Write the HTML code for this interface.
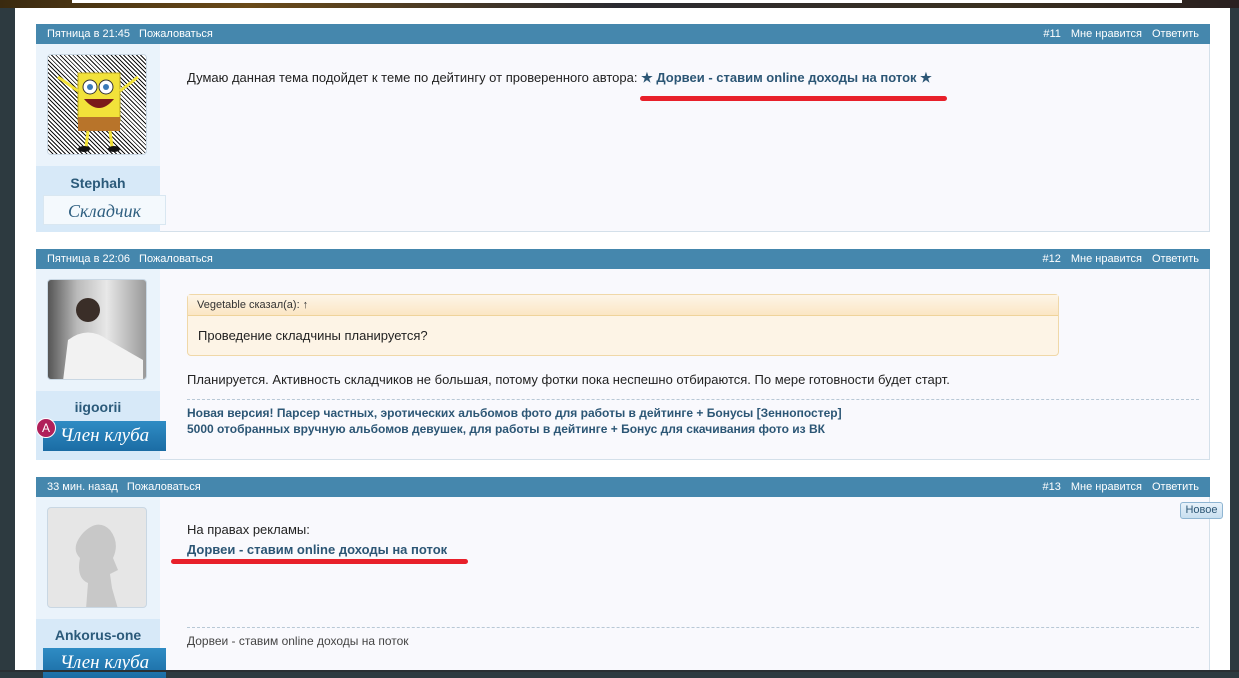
<!DOCTYPE html>
<html><head><meta charset="utf-8"><style>
*{margin:0;padding:0;box-sizing:border-box}
body{width:1239px;height:672px;overflow:hidden;background:#2d3a40;font-family:"Liberation Sans",Arial,sans-serif;position:relative}
.a{position:absolute}
.page{left:15px;top:8px;width:1215px;height:662px;background:#fff}
.hdr{left:36px;width:1174px;height:20px;background:#4587ad;color:#fff;font-size:11px;line-height:20px}
.hdr .l{position:absolute;left:11px}
.hdr .r{position:absolute;right:11px}
.hdr span{margin-right:9px}
.hdr .r span{margin:0 0 0 10px}
.body{left:36px;width:1174px;background:#f9f9fd;border:1px solid #d4e0ea;border-top:none}
.lc{left:36px;width:124px;background:#eaf3fb}
.nm{left:36px;width:124px;background:#d7e9f8;color:#2b5a7a;font-weight:bold;font-size:14px;text-align:center}
.av{left:47px;width:100px;height:101px;border:1px solid #c9d7e3;border-radius:4px;background:#fff;overflow:hidden}
.t{font-size:13px;color:#222}
.lk{color:#2c5675;font-weight:bold}
.rank{left:43px;width:123px;height:30px;font-family:"Liberation Serif",serif;font-style:italic;font-size:18px;text-align:center;line-height:30px}
.red{height:5px;background:#e8202a;border-radius:3px}
.dash{border-top:1px dashed #b8c8d6}
</style></head><body>
<div class="a" style="left:0;top:0;width:1239px;height:8px;background:linear-gradient(90deg,#3a2a10,#6a4a18 20%,#2a2a30 50%,#3a3020 80%,#2a2020)"></div>
<div class="a" style="left:72px;top:0;width:1110px;height:3px;background:#fff"></div>
<div class="a page"></div>

<!-- post 1 -->
<div class="a hdr" style="top:24px"><div class="l"><span>Пятница в 21:45</span><span>Пожаловаться</span></div><div class="r"><span>#11</span><span>Мне нравится</span><span>Ответить</span></div></div>
<div class="a body" style="top:44px;height:188px"></div>
<div class="a lc" style="top:44px;height:122px"></div>
<div class="a nm" style="top:166px;height:66px;padding-top:9px">Stephah</div>
<div class="a av" style="top:54px;background:repeating-linear-gradient(45deg,#111 0 1px,#fff 1px 3px)"><svg width="100" height="101"><rect x="30" y="18" width="42" height="48" fill="#f2e23a" stroke="#b9a520"/><rect x="30" y="62" width="42" height="14" fill="#b8742a"/><circle cx="42" cy="32" r="7" fill="#fff" stroke="#333"/><circle cx="58" cy="32" r="7" fill="#fff" stroke="#333"/><circle cx="42" cy="32" r="3" fill="#3a7ab8"/><circle cx="58" cy="32" r="3" fill="#3a7ab8"/><path d="M36 44 Q51 62 66 44 Z" fill="#7a1a1a"/><path d="M10 22 L30 36 M90 22 L72 36 M40 76 L38 92 M62 76 L64 92" stroke="#f2e23a" stroke-width="3"/><ellipse cx="36" cy="94" rx="6" ry="3" fill="#111"/><ellipse cx="66" cy="94" rx="6" ry="3" fill="#111"/></svg></div>
<div class="a rank" style="top:195px;background:#f4f9fd;color:#2f5f80;border:1px solid #d9e7f1">Складчик</div>
<div class="a t" style="left:187px;top:70px">Думаю данная тема подойдет к теме по дейтингу от проверенного автора: <span class="lk">★ Дорвеи - ставим online доходы на поток ★</span></div>
<div class="a red" style="left:640px;top:96px;width:307px"></div>

<!-- post 2 -->
<div class="a hdr" style="top:249px"><div class="l"><span>Пятница в 22:06</span><span>Пожаловаться</span></div><div class="r"><span>#12</span><span>Мне нравится</span><span>Ответить</span></div></div>
<div class="a body" style="top:269px;height:191px"></div>
<div class="a lc" style="top:269px;height:122px"></div>
<div class="a nm" style="top:391px;height:69px;padding-top:8px">iigoorii</div>
<div class="a av" style="top:279px;background:linear-gradient(90deg,#555 0,#bbb 30%,#e8e8e8 60%,#999)"><svg width="100" height="101"><circle cx="40" cy="30" r="12" fill="#3a2e28"/><path d="M15 101 L20 60 Q40 45 60 60 L95 80 L95 101 Z" fill="#f2f2f2"/></svg></div>
<div class="a rank" style="top:421px;background:linear-gradient(#2f8cc4,#1b6ca4);color:#fff;font-size:19px">Член клуба</div>
<div class="a" style="left:36px;top:418px;width:20px;height:20px;border-radius:50%;background:#b0205a;border:1px solid #fff;color:#fff;font-size:12px;text-align:center;line-height:18px">A</div>
<div class="a" style="left:187px;top:294px;width:872px;height:62px;border:1px solid #f0d8a8;border-radius:4px;background:#fdf4e6"></div>
<div class="a" style="left:188px;top:295px;width:870px;height:21px;border-bottom:1px solid #efd39a;background:linear-gradient(#fdf5e8,#fbe6c4);font-size:11px;color:#333;padding:4px 0 0 9px">Vegetable сказал(а): ↑</div>
<div class="a t" style="left:198px;top:328px">Проведение складчины планируется?</div>
<div class="a t" style="left:187px;top:372px">Планируется. Активность складчиков не большая, потому фотки пока неспешно отбираются. По мере готовности будет старт.</div>
<div class="a dash" style="left:187px;top:399px;width:1012px"></div>
<div class="a lk" style="left:187px;top:405px;font-size:12px;line-height:16px">Новая версия! Парсер частных, эротических альбомов фото для работы в дейтинге + Бонусы [Зеннопостер]<br>5000 отобранных вручную альбомов девушек, для работы в дейтинге + Бонус для скачивания фото из ВК</div>

<!-- post 3 -->
<div class="a hdr" style="top:477px"><div class="l"><span>33 мин. назад</span><span>Пожаловаться</span></div><div class="r"><span>#13</span><span>Мне нравится</span><span>Ответить</span></div></div>
<div class="a body" style="top:497px;height:175px"></div>
<div class="a lc" style="top:497px;height:122px"></div>
<div class="a nm" style="top:619px;height:53px;padding-top:8px">Ankorus-one</div>
<div class="a av" style="top:507px;background:#e6e6e6"><svg width="100" height="101"><path d="M38 101 L40 75 Q28 70 32 50 Q22 40 35 25 Q50 10 62 22 Q72 35 65 50 L70 62 L62 66 L64 80 L70 101 Z" fill="#c8c8c8"/></svg></div>
<div class="a rank" style="top:648px;background:linear-gradient(#2f8cc4,#1b6ca4);color:#fff;font-size:19px">Член клуба</div>
<div class="a t" style="left:187px;top:522px">На правах рекламы:</div>
<div class="a t lk" style="left:187px;top:542px">Дорвеи - ставим online доходы на поток</div>
<div class="a red" style="left:171px;top:559px;width:297px"></div>
<div class="a dash" style="left:187px;top:627px;width:1012px"></div>
<div class="a" style="left:187px;top:634px;font-size:12px;color:#444">Дорвеи - ставим online доходы на поток</div>
<div class="a" style="left:1180px;top:502px;width:43px;height:17px;border:1px solid #8fb5d2;border-radius:3px;background:linear-gradient(#e8f2fa,#c8dff0);font-size:11px;color:#2c5675;text-align:center;line-height:15px">Новое</div>
<div class="a" style="left:0;top:670px;width:1239px;height:2px;background:#2a2f33"></div>
</body></html>
